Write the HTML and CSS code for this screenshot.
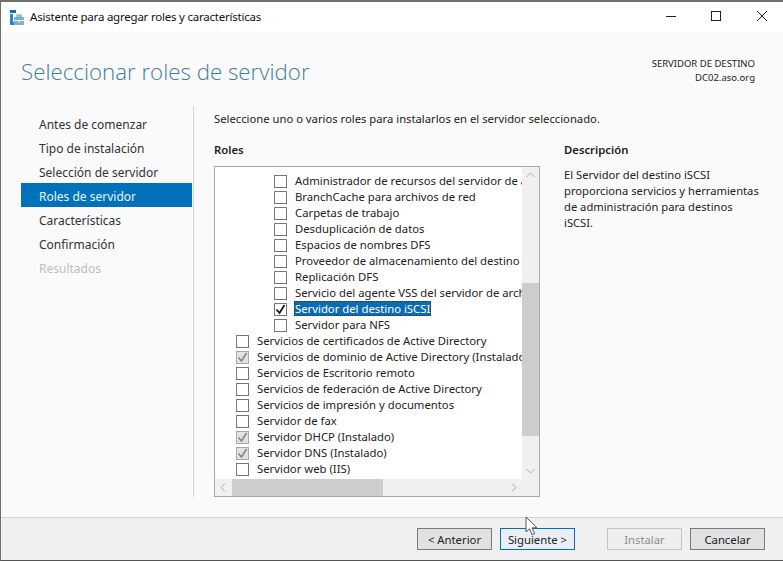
FILE: index.html
```html
<!DOCTYPE html>
<html lang="es">
<head>
<meta charset="utf-8">
<title>Asistente para agregar roles y características</title>
<link rel="stylesheet" href="styles.css">
</head>
<body>
<div class="window">
  <header class="titlebar">
    <svg class="app-icon" width="15" height="15" viewBox="0 0 15 15">
      <rect x="0" y="0" width="6" height="3" fill="#0b6fb8"/>
      <rect x="0" y="4" width="3" height="11" fill="#2a86c8"/>
      <rect x="3" y="12" width="2" height="3" fill="#2a86c8"/>
      <rect x="4" y="7" width="10" height="8" fill="#7fb2d4"/>
      <rect x="4" y="10" width="10" height="1" fill="#e8f1f7"/>
      <rect x="7" y="5" width="4" height="2" fill="none" stroke="#5b93b8" stroke-width="1"/>
      <rect x="8" y="10" width="2" height="2" fill="#fff"/>
    </svg>
    <span class="title-text">Asistente para agregar roles y características</span>
    <div class="win-controls">
      <svg class="ctl" width="46" height="30" viewBox="0 0 46 30"><path d="M21 14.5h10" stroke="#222" stroke-width="1"/></svg>
      <svg class="ctl" width="46" height="30" viewBox="0 0 46 30"><rect x="20.5" y="9.5" width="9" height="9" fill="none" stroke="#222"/></svg>
      <svg class="ctl" width="46" height="30" viewBox="0 0 46 30"><path d="M20 9l10 10M30 9l-10 10" stroke="#222" stroke-width="1"/></svg>
    </div>
  </header>

  <div class="content">
    <div class="page-head">
      <h1 class="page-title">Seleccionar roles de servidor</h1>
      <div class="dest">
        <div>SERVIDOR DE DESTINO</div>
        <div>DC02.aso.org</div>
      </div>
    </div>

    <div class="page-body">
      <nav class="steps">
        <div class="step">Antes de comenzar</div>
        <div class="step">Tipo de instalación</div>
        <div class="step">Selección de servidor</div>
        <div class="step current">Roles de servidor</div>
        <div class="step">Características</div>
        <div class="step">Confirmación</div>
        <div class="step off">Resultados</div>
      </nav>

      <main class="main">
        <p class="intro">Seleccione uno o varios roles para instalarlos en el servidor seleccionado.</p>
        <div class="columns">
          <section class="roles">
            <h2 class="heading">Roles</h2>
            <div class="listbox">
              <ul class="tree">
                <li class="row sub"><span class="box"></span><span class="label">Administrador de recursos del servidor de archivos</span></li>
                <li class="row sub"><span class="box"></span><span class="label">BranchCache para archivos de red</span></li>
                <li class="row sub"><span class="box"></span><span class="label">Carpetas de trabajo</span></li>
                <li class="row sub"><span class="box"></span><span class="label">Desduplicación de datos</span></li>
                <li class="row sub"><span class="box"></span><span class="label">Espacios de nombres DFS</span></li>
                <li class="row sub"><span class="box"></span><span class="label">Proveedor de almacenamiento del destino iSCSI</span></li>
                <li class="row sub"><span class="box"></span><span class="label">Replicación DFS</span></li>
                <li class="row sub"><span class="box"></span><span class="label">Servicio del agente VSS del servidor de archivos</span></li>
                <li class="row sub"><span class="box"><svg class="tick" width="13" height="13" viewBox="0 0 13 13"><path d="M2.5 6.5l3 3.5 5-8" fill="none" stroke="#111" stroke-width="1.7"/></svg></span><span class="label selected">Servidor del destino iSCSI</span></li>
                <li class="row sub"><span class="box"></span><span class="label">Servidor para NFS</span></li>
                <li class="row"><span class="box"></span><span class="label">Servicios de certificados de Active Directory</span></li>
                <li class="row"><span class="box grey"><svg class="tick" width="13" height="13" viewBox="0 0 13 13"><path d="M2.5 6.5l3 3.5 5-8" fill="none" stroke="#8a8a8a" stroke-width="1.7"/></svg></span><span class="label">Servicios de dominio de Active Directory (Instalado)</span></li>
                <li class="row"><span class="box"></span><span class="label">Servicios de Escritorio remoto</span></li>
                <li class="row"><span class="box"></span><span class="label">Servicios de federación de Active Directory</span></li>
                <li class="row"><span class="box"></span><span class="label">Servicios de impresión y documentos</span></li>
                <li class="row"><span class="box"></span><span class="label">Servidor de fax</span></li>
                <li class="row"><span class="box grey"><svg class="tick" width="13" height="13" viewBox="0 0 13 13"><path d="M2.5 6.5l3 3.5 5-8" fill="none" stroke="#8a8a8a" stroke-width="1.7"/></svg></span><span class="label">Servidor DHCP (Instalado)</span></li>
                <li class="row"><span class="box grey"><svg class="tick" width="13" height="13" viewBox="0 0 13 13"><path d="M2.5 6.5l3 3.5 5-8" fill="none" stroke="#8a8a8a" stroke-width="1.7"/></svg></span><span class="label">Servidor DNS (Instalado)</span></li>
                <li class="row"><span class="box"></span><span class="label">Servidor web (IIS)</span></li>
              </ul>
              <div class="vscroll">
                <svg width="17" height="17" viewBox="0 0 17 17"><path d="M4.5 10l4-4 4 4" fill="none" stroke="#aaa"/></svg>
                <div class="v-track"><div class="v-thumb"></div></div>
                <svg width="17" height="17" viewBox="0 0 17 17"><path d="M4.5 7l4 4 4-4" fill="none" stroke="#aaa"/></svg>
              </div>
              <div class="hscroll">
                <svg width="17" height="17" viewBox="0 0 17 17"><path d="M10 4.5l-4 4 4 4" fill="none" stroke="#aaa"/></svg>
                <div class="h-track"><div class="h-thumb"></div></div>
                <svg width="17" height="17" viewBox="0 0 17 17"><path d="M7 4.5l4 4-4 4" fill="none" stroke="#aaa"/></svg>
              </div>
              <div class="corner"></div>
            </div>
          </section>
          <aside class="desc">
            <h2 class="heading">Descripción</h2>
            <p class="desc-text">El Servidor del destino iSCSI proporciona servicios y herramientas de administración para destinos iSCSI.</p>
          </aside>
        </div>
      </main>
    </div>
  </div>

  <footer class="footer">
    <button class="btn">&lt; Anterior</button>
    <button class="btn focus">Siguiente &gt;</button>
    <button class="btn disabled">Instalar</button>
    <button class="btn">Cancelar</button>
  </footer>
</div>
<svg class="cursor" width="14" height="21" viewBox="0 0 14 21"><path d="M1 1v15l3.5-3.2 2.6 6 2.6-1.1-2.6-5.9h4.9z" fill="#fff" stroke="#555" stroke-width="1"/></svg>
</body>
</html>
```
FILE: styles.css
```css
* { box-sizing: border-box; }
html, body { margin: 0; padding: 0; }
body {
  width: 783px;
  height: 561px;
  overflow: hidden;
  position: relative;
  background: #fff;
  font-family: "Noto Sans", "Open Sans", sans-serif;
  font-size: 11.3px;
  color: #222;
}
.window {
  width: 783px;
  height: 561px;
  display: flex;
  flex-direction: column;
  border-top: 2px solid #6f6f6f;
  border-left: 1px solid #6f6f6f;
  border-bottom: 1px solid #555;
}
.titlebar {
  height: 30px;
  flex: none;
  background: #fff;
  display: flex;
  align-items: center;
  padding-left: 9px;
}
.app-icon { flex: none; margin: 0 5px 0 0; }
.title-text { font-size: 11.5px; letter-spacing: -0.22px; line-height: 30px; align-self: flex-start; color: #111; }
.win-controls { margin-left: auto; display: flex; }
.ctl { display: block; }
.content {
  flex: 1;
  background: #fafafa;
  display: flex;
  flex-direction: column;
  min-height: 0;
}
.page-head {
  height: 74px;
  flex: none;
  display: flex;
  justify-content: space-between;
  padding: 0 28px 0 20px;
}
.page-title {
  margin: 25px 0 0;
  font-weight: 300;
  font-size: 22.3px;
  line-height: 30px;
  color: #3f7f9c;
  font-family: "Open Sans", "Noto Sans", sans-serif;
}
.dest {
  margin-top: 25px;
  text-align: right;
  font-size: 9.5px;
  line-height: 14px;
  color: #222;
}
.page-body { flex: 1; display: flex; min-height: 0; }
.steps {
  width: 173px;
  flex: none;
  margin-left: 20px;
  padding-top: 5px;
  height: 391px;
  border-right: 1px solid #d4d4d4;
}
.step {
  height: 24px;
  line-height: 28px;
  padding-left: 18px;
  font-size: 12px;
  color: #333;
  width: 171px;
}
.step.current { background: #0072bc; color: #e8f6ff; }
.step.off { color: #bdbdbd; }
.main { flex: 1; padding: 5px 0 0 20px; min-width: 0; }
.intro { margin: 0; font-size: 11.25px; line-height: 16px; color: #222; }
.columns { display: flex; margin-top: 15px; }
.roles { width: 326px; flex: none; }
.heading { margin: 0; font-size: 11.3px; font-weight: 600; line-height: 16px; color: #222; }
.listbox {
  margin-top: 8px;
  width: 326px;
  height: 331px;
  background: #fff;
  border: 1px solid #a9a9a9;
  display: grid;
  grid-template-columns: 307px 17px;
  grid-template-rows: 312px 17px;
}
.tree {
  margin: 0;
  padding: 6px 0 0;
  list-style: none;
  overflow: hidden;
  min-width: 0;
}
.row {
  height: 16px;
  display: flex;
  align-items: center;
  padding-left: 21px;
  white-space: nowrap;
  font-size: 11.3px;
  color: #222;
}
.row.sub { padding-left: 59px; }
.box {
  flex: none;
  width: 13px;
  height: 13px;
  border: 1px solid #767676;
  background: #fff;
  margin-right: 8px;
  position: relative;
}
.box.grey { background: #e2e2e2; border-color: #a8a8a8; }
.tick { position: absolute; left: -1px; top: -1px; }
.label { line-height: 15px; padding: 0 1px; margin-left: -1px; position: relative; top: -1px; }
.label.selected { background: #0a6cb5; color: #fff; outline: 1px dotted #333; outline-offset: -1px; }
.vscroll { background: #f0f0f0; display: flex; flex-direction: column; }
.vscroll svg, .hscroll svg { display: block; flex: none; }
.v-track { flex: 1; padding-top: 99px; }
.v-thumb { height: 153px; background: #cdcdcd; }
.hscroll { background: #f0f0f0; display: flex; }
.h-track { flex: 1; }
.h-thumb { width: 151px; height: 17px; background: #cdcdcd; }
.corner { background: #f0f0f0; }
.desc { margin-left: 24px; width: 197px; }
.desc-text { margin: 9px 0 0; font-size: 11.2px; line-height: 16px; color: #222; }
.footer {
  height: 43px;
  flex: none;
  background: #f0f0f0;
  border-top: 1px solid #d4d4d4;
  display: flex;
  align-items: center;
  padding: 0 0 1px 416px;
}
.btn {
  width: 75px;
  height: 22px;
  padding: 2px 0 0;
  background: #e1e1e1;
  border: 1px solid #7a7a7a;
  font-family: "Noto Sans", "Open Sans", sans-serif;
  font-size: 11.3px;
  color: #222;
  margin-right: 8px;
}
.btn.focus { background: #e9eff4; border-color: #0a6cb5; margin-right: 32px; }
.btn.disabled { background: #eee; border-color: #c4c4c4; color: #8f8f8f; margin-right: 8px; }
.cursor { position: absolute; left: 525px; top: 516px; }
```
